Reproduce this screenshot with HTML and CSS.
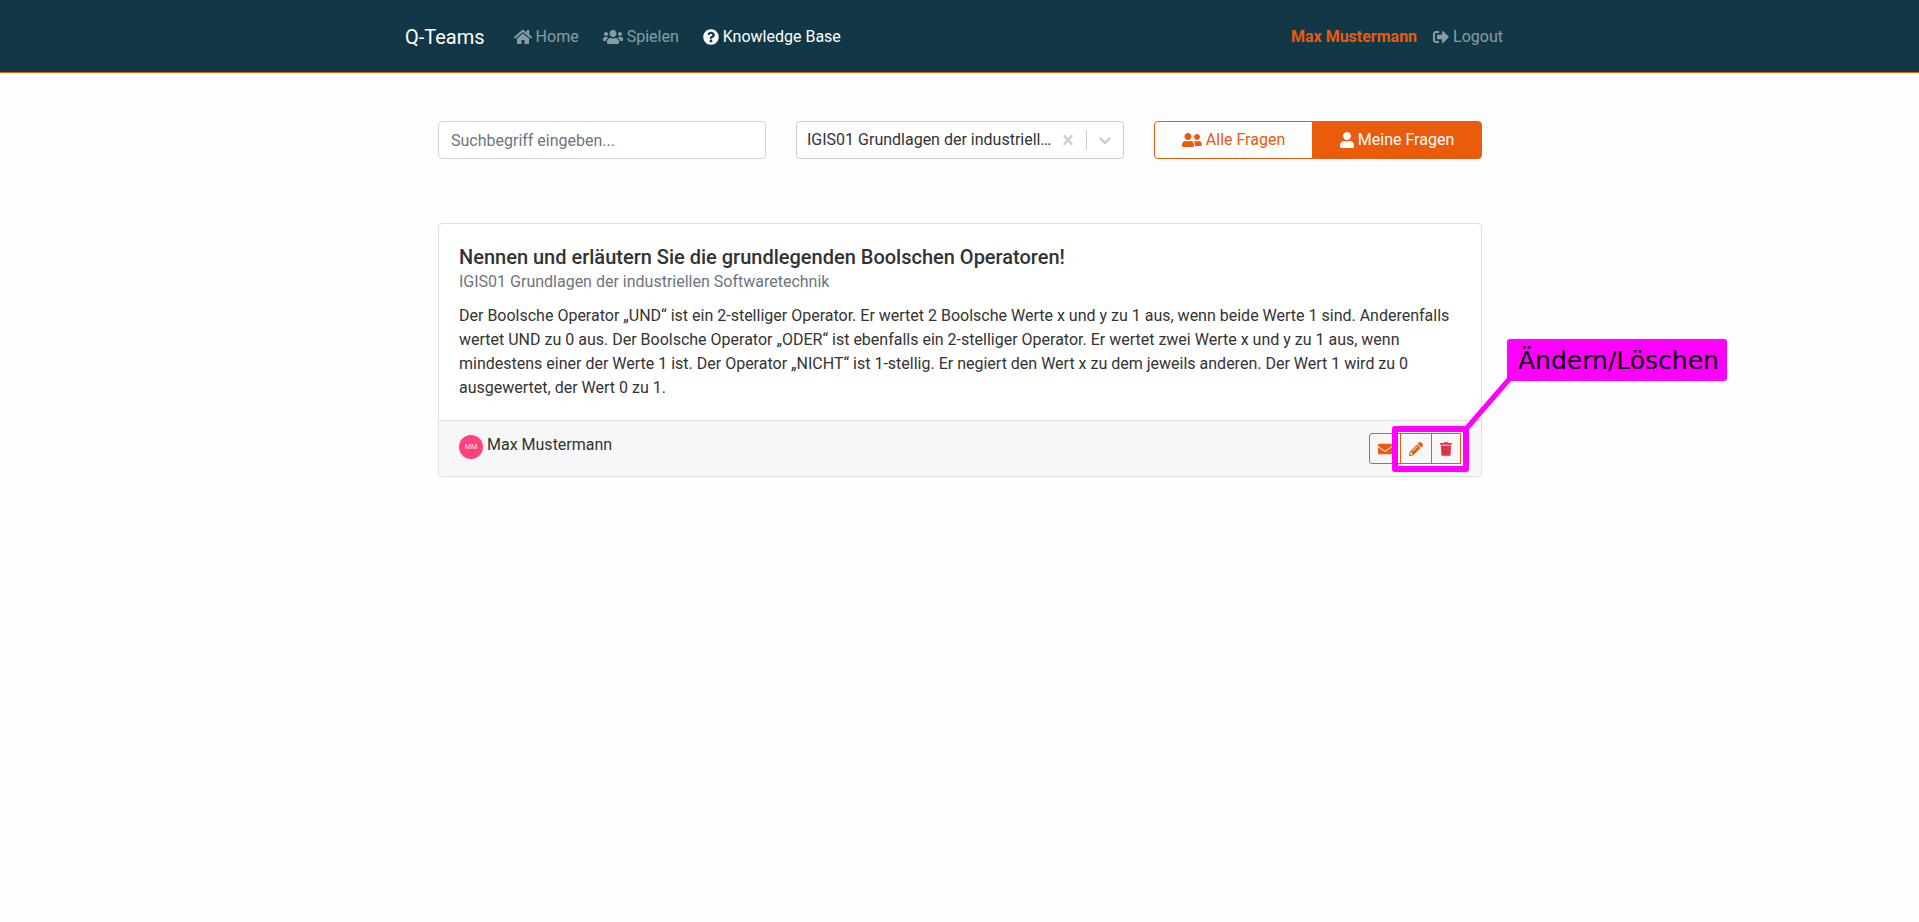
FILE: index.html
```html
<!DOCTYPE html>
<html lang="de">
<head>
<meta charset="utf-8">
<meta name="viewport" content="width=device-width, initial-scale=1">
<title>Q-Teams – Knowledge Base</title>
<link rel="stylesheet" href="styles.css">
</head>
<body>
<header class="navbar">
  <nav class="navbar-inner">
    <a class="brand" href="#">Q-Teams</a>
    <div class="nav-main">
      <a class="nav-link" href="#"><svg class="icon" viewBox="0 0 576 512" width="18" height="16" aria-hidden="true"><path d="M280.37 148.26L96 300.11V464a16 16 0 0 0 16 16l112.06-.29a16 16 0 0 0 15.92-16V368a16 16 0 0 1 16-16h64a16 16 0 0 1 16 16v95.64a16 16 0 0 0 16 16.05L464 480a16 16 0 0 0 16-16V300L295.67 148.26a12.19 12.19 0 0 0-15.3 0zM571.6 251.47L488 182.56V44.05a12 12 0 0 0-12-12h-56a12 12 0 0 0-12 12v72.61L318.47 43a48 48 0 0 0-61 0L4.34 251.47a12 12 0 0 0-1.6 16.9l25.5 31A12 12 0 0 0 45.15 301l235.22-193.74a12.19 12.19 0 0 1 15.3 0L530.9 301a12 12 0 0 0 16.9-1.6l25.5-31a12 12 0 0 0-1.7-16.93z"/></svg>Home</a>
      <a class="nav-link" href="#"><svg class="icon" viewBox="0 0 640 512" width="20" height="16" aria-hidden="true"><path d="M96 224c35.3 0 64-28.7 64-64s-28.7-64-64-64-64 28.7-64 64 28.7 64 64 64zm448 0c35.3 0 64-28.7 64-64s-28.7-64-64-64-64 28.7-64 64 28.7 64 64 64zm32 32h-64c-17.6 0-33.5 7.1-45.1 18.6 40.3 22.1 68.9 62 75.1 109.4h66c17.7 0 32-14.3 32-32v-32c0-35.3-28.7-64-64-64zm-256 0c61.9 0 112-50.1 112-112S381.9 32 320 32 208 82.1 208 144s50.1 112 112 112zm76.8 32h-8.3c-20.8 10-43.9 16-68.5 16s-47.6-6-68.5-16h-8.3C179.6 288 128 339.6 128 403.2V432c0 26.5 21.5 48 48 48h288c26.5 0 48-21.5 48-48v-28.8c0-63.6-51.6-115.2-115.2-115.2zm-223.7-13.4C161.5 263.1 145.6 256 128 256H64c-35.3 0-64 28.7-64 64v32c0 17.7 14.3 32 32 32h65.9c6.3-47.4 34.9-87.3 75.2-109.4z"/></svg>Spielen</a>
      <a class="nav-link active" href="#" aria-current="page"><svg class="icon" viewBox="0 0 512 512" width="16" height="16" aria-hidden="true"><path d="M504 256c0 136.997-111.043 248-248 248S8 392.997 8 256C8 119.083 119.043 8 256 8s248 111.083 248 248zM262.655 90c-54.497 0-89.255 22.957-116.549 63.758-3.536 5.286-2.353 12.415 2.715 16.258l34.699 26.31c5.205 3.947 12.621 3.008 16.665-2.122 17.864-22.658 30.113-35.797 57.303-35.797 20.429 0 45.698 13.148 45.698 32.958 0 14.976-12.363 22.667-32.534 33.976C247.128 238.528 216 254.941 216 296v4c0 6.627 5.373 12 12 12h56c6.627 0 12-5.373 12-12v-1.333c0-28.462 83.186-29.647 83.186-106.667 0-58.002-60.165-102-116.531-102zM256 338c-25.365 0-46 20.635-46 46 0 25.364 20.635 46 46 46s46-20.636 46-46c0-25.365-20.635-46-46-46z"/></svg>Knowledge Base</a>
    </div>
    <div class="nav-user">
      <a class="user-name" href="#">Max Mustermann</a>
      <a class="nav-link" href="#"><svg class="icon" viewBox="0 0 512 512" width="16" height="16" aria-hidden="true"><path d="M497 273L329 441c-15 15-41 4.5-41-17v-96H152c-13.3 0-24-10.7-24-24v-96c0-13.3 10.7-24 24-24h136V88c0-21.4 25.9-32 41-17l168 168c9.3 9.4 9.3 24.6 0 34zM192 436v-40c0-6.6-5.4-12-12-12H96c-17.7 0-32-14.3-32-32V160c0-17.7 14.3-32 32-32h84c6.6 0 12-5.4 12-12V76c0-6.6-5.4-12-12-12H96c-53 0-96 43-96 96v192c0 53 43 96 96 96h84c6.6 0 12-5.4 12-12z"/></svg>Logout</a>
    </div>
  </nav>
</header>
<main class="content">
  <form class="filters">
    <input class="search" type="text" placeholder="Suchbegriff eingeben..." aria-label="Suchbegriff">
    <div class="module-select">
      <select class="module-value" aria-label="Modul">
        <option>IGIS01 Grundlagen der industriellen Softwaretechnik</option>
      </select>
      <button class="clear" type="button" aria-label="Auswahl löschen"><svg class="icon" viewBox="0 0 20 20" width="20" height="20" aria-hidden="true"><path d="M14.348 14.849c-0.469 0.469-1.229 0.469-1.697 0l-2.651-3.030-2.651 3.029c-0.469 0.469-1.229 0.469-1.697 0-0.469-0.469-0.469-1.229 0-1.697l2.758-3.15-2.759-3.152c-0.469-0.469-0.469-1.228 0-1.697s1.228-0.469 1.697 0l2.652 3.031 2.651-3.031c0.469-0.469 1.228-0.469 1.697 0s0.469 1.229 0 1.697l-2.758 3.152 2.758 3.15c0.469 0.469 0.469 1.229 0 1.698z"/></svg></button>
      <span class="separator"></span>
      <span class="chevron"><svg class="icon" viewBox="0 0 20 20" width="20" height="20" aria-hidden="true"><path d="M4.516 7.548c0.436-0.446 1.043-0.481 1.576 0l3.908 3.747 3.908-3.747c0.533-0.481 1.141-0.446 1.574 0 0.436 0.445 0.408 1.197 0 1.615-0.406 0.418-4.695 4.502-4.695 4.502-0.217 0.223-0.502 0.335-0.787 0.335s-0.570-0.112-0.789-0.335c0 0-4.287-4.084-4.695-4.502s-0.436-1.170 0-1.615z"/></svg></span>
    </div>
    <div class="toggle">
      <button class="toggle-btn" type="button" aria-pressed="false"><svg class="icon" viewBox="0 0 640 512" width="20" height="16" aria-hidden="true"><path d="M192 256c61.9 0 112-50.1 112-112S253.9 32 192 32 80 82.1 80 144s50.1 112 112 112zm76.8 32h-8.3c-20.8 10-43.9 16-68.5 16s-47.6-6-68.5-16h-8.3C51.6 288 0 339.6 0 403.2V432c0 26.5 21.5 48 48 48h288c26.5 0 48-21.5 48-48v-28.8c0-63.6-51.6-115.2-115.2-115.2zM480 256c53 0 96-43 96-96s-43-96-96-96-96 43-96 96 43 96 96 96zm48 32h-3.8c-13.9 4.8-28.6 8-44.2 8s-30.3-3.2-44.2-8H432c-20.4 0-39.2 5.9-55.7 15.4 24.4 26.3 39.7 61.2 39.7 99.8v38.4c0 2.2-.5 4.3-.6 6.4H592c26.5 0 48-21.5 48-48 0-61.9-50.1-112-112-112z"/></svg>Alle Fragen</button>
      <button class="toggle-btn selected" type="button" aria-pressed="true"><svg class="icon" viewBox="0 0 448 512" width="14" height="16" aria-hidden="true"><path d="M224 256c70.7 0 128-57.3 128-128S294.7 0 224 0 96 57.3 96 128s57.3 128 128 128zm89.6 32h-16.7c-22.2 10.2-46.9 16-72.9 16s-50.6-5.8-72.9-16h-16.7C60.2 288 0 348.2 0 422.4V464c0 26.5 21.5 48 48 48h352c26.5 0 48-21.5 48-48v-41.6c0-74.2-60.2-134.4-134.4-134.4z"/></svg>Meine Fragen</button>
    </div>
  </form>
  <article class="card">
    <div class="card-body">
      <h1 class="card-title">Nennen und erläutern Sie die grundlegenden Boolschen Operatoren!</h1>
      <p class="card-subtitle">IGIS01 Grundlagen der industriellen Softwaretechnik</p>
      <p class="card-text">Der Boolsche Operator „UND“ ist ein 2-stelliger Operator. Er wertet 2 Boolsche Werte x und y zu 1 aus, wenn beide Werte 1 sind. Anderenfalls wertet UND zu 0 aus. Der Boolsche Operator „ODER“ ist ebenfalls ein 2-stelliger Operator. Er wertet zwei Werte x und y zu 1 aus, wenn mindestens einer der Werte 1 ist. Der Operator „NICHT“ ist 1-stellig. Er negiert den Wert x zu dem jeweils anderen. Der Wert 1 wird zu 0 ausgewertet, der Wert 0 zu 1.</p>
    </div>
    <footer class="card-footer">
      <div class="author"><span class="avatar">MM</span><span>Max Mustermann</span></div>
      <div class="actions">
        <button class="action first" type="button" aria-label="Nachricht"><svg class="icon" viewBox="0 0 512 512" width="14" height="14" aria-hidden="true"><path d="M502.3 190.8c3.9-3.1 9.7-.2 9.7 4.7V400c0 26.5-21.5 48-48 48H48c-26.5 0-48-21.5-48-48V195.6c0-5 5.7-7.8 9.7-4.7 22.4 17.4 52.1 39.5 154.1 113.6 21.1 15.4 56.7 47.8 92.2 47.6 35.7.3 72-32.8 92.3-47.6 102-74.1 131.6-96.3 154-113.7zM256 320c23.2.4 56.6-29.2 73.4-41.4 132.7-96.3 142.8-104.7 173.4-128.7 5.8-4.5 9.2-11.5 9.2-18.9v-19c0-26.5-21.5-48-48-48H48c-26.5 0-48 21.5-48 48v19c0 7.4 3.4 14.3 9.2 18.9 30.6 23.9 40.7 32.4 173.4 128.7 16.8 12.2 50.2 41.8 73.4 41.4z"/></svg></button>
        <button class="action" type="button" aria-label="Ändern"><svg class="icon" viewBox="0 0 512 512" width="14" height="14" aria-hidden="true"><path d="M497.9 142.1l-46.1 46.1c-4.7 4.7-12.3 4.7-17 0l-111-111c-4.7-4.7-4.7-12.3 0-17l46.1-46.1c18.7-18.7 49.1-18.7 67.9 0l60.1 60.1c18.8 18.7 18.8 49.1 0 67.9zM284.2 99.8L21.6 362.4.4 483.9c-2.9 16.4 11.4 30.6 27.8 27.8l121.5-21.3 262.6-262.6c4.7-4.7 4.7-12.3 0-17l-111-111c-4.8-4.7-12.4-4.7-17.1 0zM124.1 339.9c-5.5-5.5-5.5-14.3 0-19.8l154-154c5.5-5.5 14.3-5.5 19.8 0s5.5 14.3 0 19.8l-154 154c-5.5 5.5-14.3 5.5-19.8 0zM88 424h48v36.3l-64.5 11.3-31.1-31.1L51.7 376H88v48z"/></svg></button>
        <button class="action delete" type="button" aria-label="Löschen"><svg class="icon" viewBox="0 0 448 512" width="12" height="14" aria-hidden="true"><path d="M432 32H312l-9.4-18.7A24 24 0 0 0 281.1 0H166.8a23.72 23.72 0 0 0-21.4 13.3L136 32H16A16 16 0 0 0 0 48v32a16 16 0 0 0 16 16h416a16 16 0 0 0 16-16V48a16 16 0 0 0-16-16zM53.2 467a48 48 0 0 0 47.9 45h245.8a48 48 0 0 0 47.9-45L416 128H32z"/></svg></button>
        <div class="callout-frame"></div>
        <svg class="callout-line" viewBox="0 0 54 60" width="54" height="60" aria-hidden="true"><path d="M4 56L50 3"/></svg>
        <div class="callout-label">Ändern/Löschen</div>
      </div>
    </footer>
  </article>
</main>
</body>
</html>
```
FILE: styles.css
```css
:root {
  --orange: #ea5b0c;
  --navy: #123847;
  --magenta: #ff00ff;
}

*,
*::before,
*::after {
  box-sizing: border-box;
}

body {
  margin: 0;
  background: #fdfdfd;
  color: #333;
  font: 16px/24px Roboto, "Liberation Sans", sans-serif;
}

button,
input,
select {
  margin: 0;
  font: inherit;
  color: inherit;
}

.icon {
  display: block;
  flex: none;
  fill: currentColor;
}

.navbar {
  background: var(--navy);
  border-bottom: 1px solid var(--orange);
}

.navbar-inner {
  display: flex;
  align-items: center;
  max-width: 1141px;
  min-height: 72px;
  margin: 0 auto;
  padding: 2px 27px 0 16px;
}

.brand {
  margin-right: 29px;
  color: #fff;
  font-size: 20px;
  line-height: 30px;
  text-decoration: none;
}

.nav-main {
  display: flex;
  gap: 24px;
}

.nav-user {
  display: flex;
  gap: 16px;
  margin-left: auto;
}

.nav-link {
  display: flex;
  align-items: center;
  gap: 4px;
  color: rgba(255, 255, 255, 0.5);
  text-decoration: none;
}

.nav-link.active {
  color: #fff;
}

.user-name {
  color: var(--orange);
  font-weight: 700;
  text-decoration: none;
}

.content {
  max-width: 1073px;
  margin: 0 auto;
  padding: 48px 14px 48px 15px;
}

.filters {
  display: grid;
  grid-template-columns: repeat(3, minmax(0, 1fr));
  gap: 30px;
  margin-bottom: 64px;
}

.search {
  width: 100%;
  height: 38px;
  padding: 6px 12px;
  background: #fff;
  border: 1px solid #ced4da;
  border-radius: 4px;
}

.search::placeholder {
  color: #6c757d;
  opacity: 1;
}

.module-select {
  display: flex;
  align-items: center;
  height: 38px;
  background: #fff;
  border: 1px solid #ccc;
  border-radius: 4px;
  color: #ccc;
}

.module-value {
  flex: 1;
  min-width: 0;
  height: 24px;
  padding: 0 0 0 10px;
  appearance: none;
  background: none;
  border: 0;
  color: #333;
  text-overflow: ellipsis;
  white-space: nowrap;
  overflow: hidden;
}

.clear,
.chevron {
  display: block;
  padding: 8px;
  background: none;
  border: 0;
}

.clear {
  padding-left: 4px;
}

.separator {
  width: 1px;
  height: 20px;
  background: #ccc;
}

.toggle {
  display: flex;
}

.toggle-btn {
  display: flex;
  flex: 1 1 auto;
  align-items: center;
  justify-content: center;
  gap: 4px;
  height: 38px;
  padding: 0 12px;
  background: transparent;
  border: 1px solid var(--orange);
  border-radius: 4px 0 0 4px;
  color: var(--orange);
}

.toggle-btn.selected {
  margin-left: -1px;
  background: var(--orange);
  border-radius: 0 4px 4px 0;
  color: #fff;
}

.card {
  background: #fff;
  border: 1px solid #dfdfdf;
  border-radius: 4px;
}

.card-body {
  padding: 20px;
}

.card-title {
  margin: 0;
  font-size: 20px;
  font-weight: 500;
  line-height: 26px;
}

.card-subtitle {
  margin: 0 0 10px;
  color: #6c757d;
}

.card-text {
  margin: 0;
}

.card-footer {
  display: flex;
  align-items: flex-start;
  justify-content: space-between;
  padding: 12px 20px;
  background: #f7f7f7;
  border-top: 1px solid #dfdfdf;
  border-radius: 0 0 3px 3px;
}

.author {
  display: flex;
  gap: 4px;
}

.avatar {
  width: 24px;
  height: 24px;
  margin-top: 2px;
  background: #ff4081;
  border-radius: 50%;
  color: #fff;
  font-family: "Open Sans", sans-serif;
  font-size: 7px;
  text-align: center;
}

.actions {
  position: relative;
  display: flex;
}

.action {
  display: flex;
  align-items: center;
  height: 31px;
  padding: 0 8px;
  background: transparent;
  border: 1px solid var(--orange);
  color: var(--orange);
}

.action + .action {
  margin-left: -1px;
}

.action.first {
  border-radius: 3px 0 0 3px;
}

.action.delete {
  color: #dc3545;
}

/* Highlight around the edit and delete buttons, with its label */
.callout-frame {
  position: absolute;
  top: -7px;
  right: -8px;
  width: 77px;
  height: 46px;
  border: 6px solid var(--magenta);
  border-radius: 3px;
}

.callout-line {
  position: absolute;
  top: -60px;
  left: calc(100% + 1px);
  fill: none;
  stroke: var(--magenta);
  stroke-width: 5;
}

.callout-label {
  position: absolute;
  top: -94px;
  left: calc(100% + 46px);
  padding: 7px 8px 5px 11px;
  background: var(--magenta);
  border-radius: 3px;
  color: #000;
  font: 25px/30px "DejaVu Sans", sans-serif;
  white-space: nowrap;
}
```
